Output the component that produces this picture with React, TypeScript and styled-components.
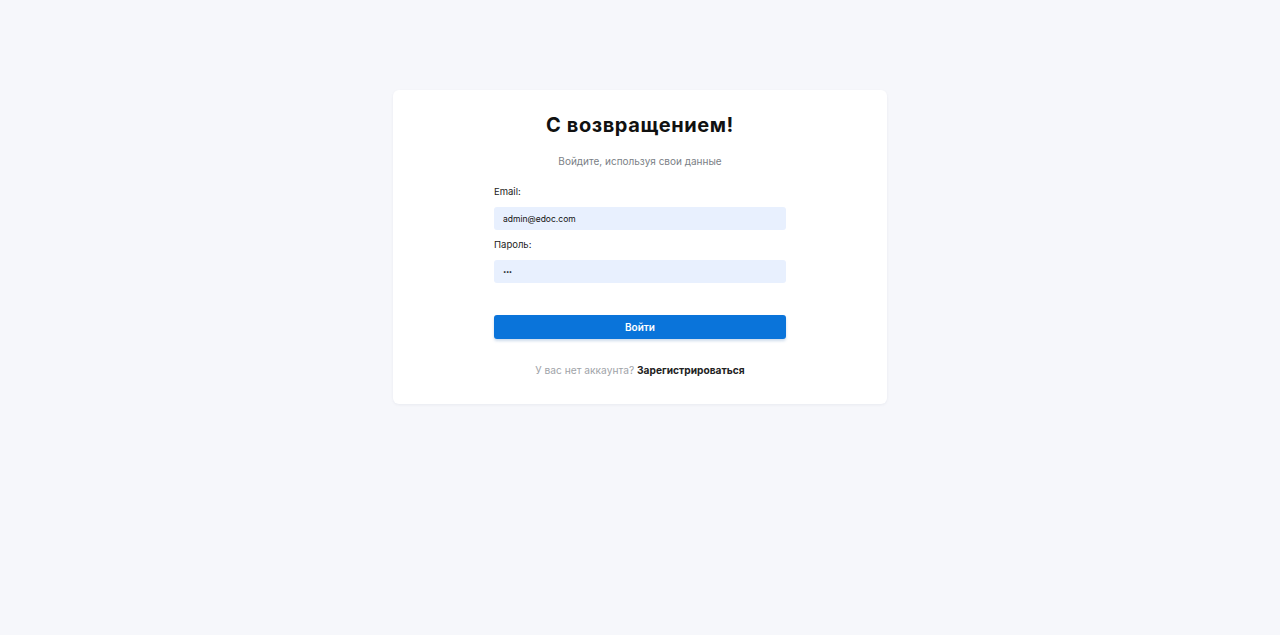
import styled, { createGlobalStyle } from 'styled-components';

const GlobalStyle = createGlobalStyle`
  body {
    margin: 0;
    background: #f6f7fb;
    font-family: Inter, "Noto Sans", sans-serif;
  }
`;

const App = () => {
  return (
    <>
      <GlobalStyle />
      <Page>
        <Card>
          <Title>С возвращением!</Title>
          <Subtitle>Войдите, используя свои данные</Subtitle>
          <Form onSubmit={(e) => e.preventDefault()}>
            <Label htmlFor="email">Email:</Label>
            <Input id="email" type="email" defaultValue="admin@edoc.com" />
            <Label htmlFor="password">Пароль:</Label>
            <Input id="password" type="password" defaultValue="123" $secret />
            <Button type="submit">Войти</Button>
          </Form>
          <Footer>
            У вас нет аккаунта? <FooterLink href="#">Зарегистрироваться</FooterLink>
          </Footer>
        </Card>
      </Page>
    </>
  );
};

const Page = styled.div`
  min-height: 635px;
  display: flex;
  justify-content: center;
  align-items: flex-start;
  padding-top: 90px;
  box-sizing: border-box;
`;

const Card = styled.div`
  width: 494px;
  box-sizing: border-box;
  background: #fff;
  border-radius: 6px;
  box-shadow: 0 1px 3px rgba(20, 30, 60, 0.06);
  padding: 22px 0 27px;
  display: flex;
  flex-direction: column;
  align-items: center;
`;

const Title = styled.h1`
  margin: 0;
  font-size: 20px;
  line-height: 26px;
  font-weight: 700;
  letter-spacing: 0.6px;
  color: #111;
`;

const Subtitle = styled.p`
  margin: 16px 0 0;
  font-size: 10px;
  line-height: 14px;
  color: #7b7f86;
`;

const Form = styled.form`
  width: 292px;
  margin-top: 18px;
  display: flex;
  flex-direction: column;
`;

const Label = styled.label`
  font-size: 9.5px;
  line-height: 12px;
  color: #222;
  margin-bottom: 9px;
`;

const Input = styled.input<{ $secret?: boolean }>`
  height: 23px;
  box-sizing: border-box;
  border: none;
  border-radius: 3px;
  background: #e8f0fe;
  padding: 0 9px;
  font-family: Inter, sans-serif;
  font-size: ${(p) => (p.$secret ? '6px' : '8.5px')};
  letter-spacing: ${(p) => (p.$secret ? '-0.5px' : '0')};
  color: #111;
  margin-bottom: 9px;
  outline: none;
`;

const Button = styled.button`
  margin-top: 23px;
  height: 24px;
  border: none;
  border-radius: 3px;
  background: #0a74da;
  color: #fff;
  font-family: Inter, sans-serif;
  font-size: 10px;
  font-weight: 600;
  box-shadow: 0 2px 3px rgba(10, 80, 160, 0.2);
  cursor: pointer;
`;

const Footer = styled.p`
  margin: 24px 0 0;
  font-size: 10.2px;
  line-height: 14px;
  color: #a0a3a8;
`;

const FooterLink = styled.a`
  color: #222;
  font-weight: 700;
  text-decoration: none;
`;

export default App;
